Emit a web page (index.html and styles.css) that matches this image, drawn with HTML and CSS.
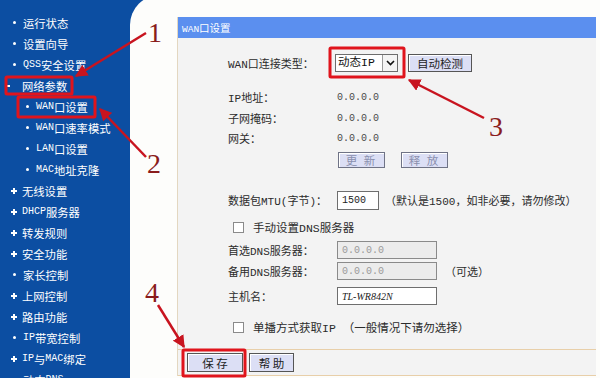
FILE: index.html
```html
<!DOCTYPE html>
<html lang="zh-CN">
<head>
<meta charset="utf-8">
<title>WAN口设置</title>
<link rel="stylesheet" href="styles.css">
</head>
<body>
<div class="page">
  <nav class="sidebar">
    <ul class="menu">
      <li class="dot">运行状态</li>
      <li class="dot">设置向导</li>
      <li class="dot"><span class="en">QSS</span>安全设置</li>
      <li class="minus">网络参数</li>
      <li class="sub"><span class="en">WAN</span>口设置</li>
      <li class="sub"><span class="en">WAN</span>口速率模式</li>
      <li class="sub"><span class="en">LAN</span>口设置</li>
      <li class="sub"><span class="en">MAC</span>地址克隆</li>
      <li class="star">无线设置</li>
      <li class="star"><span class="en">DHCP</span>服务器</li>
      <li class="star">转发规则</li>
      <li class="star">安全功能</li>
      <li class="dot">家长控制</li>
      <li class="star">上网控制</li>
      <li class="star">路由功能</li>
      <li class="dot"><span class="en">IP</span>带宽控制</li>
      <li class="star"><span class="en">IP</span>与<span class="en">MAC</span>绑定</li>
      <li class="dot">动态<span class="en">DNS</span></li>
    </ul>
  </nav>

  <main class="main">
    <section class="panel">
      <div class="panel-head"><span class="en">WAN</span>口设置</div>
      <div class="panel-body">
        <div class="row row-type">
          <span class="label">WAN口连接类型：</span>
          <span class="value">
            <span class="select"><span class="select-text">动态IP</span><span class="select-arrow"><svg width="9" height="6" viewBox="0 0 9 6"><polyline points="1,1 4.5,4.5 8,1" fill="none" stroke="#111" stroke-width="1.6"/></svg></span></span>
            <span class="btn btn-detect">自动检测</span>
          </span>
        </div>
        <div class="row row-ip">
          <span class="label">IP地址：</span>
          <span class="value num">0.0.0.0</span>
        </div>
        <div class="row row-tight">
          <span class="label">子网掩码：</span>
          <span class="value num">0.0.0.0</span>
        </div>
        <div class="row">
          <span class="label">网关：</span>
          <span class="value num">0.0.0.0</span>
        </div>
        <div class="row row-btns">
          <span class="label"></span>
          <span class="value">
            <span class="btn btn-off btn-renew">更 新</span>
            <span class="btn btn-off btn-release">释 放</span>
          </span>
        </div>
        <div class="row row-mtu">
          <span class="label">数据包MTU(字节)：</span>
          <span class="value">
            <span class="input input-mtu">1500</span>
            <span class="note">（默认是1500，如非必要，请勿修改）</span>
          </span>
        </div>
        <div class="row row-check1">
          <span class="check"><span class="box"></span>手动设置DNS服务器</span>
        </div>
        <div class="row row-dns1">
          <span class="label">首选DNS服务器：</span>
          <span class="value"><span class="input input-off">0.0.0.0</span></span>
        </div>
        <div class="row row-tight">
          <span class="label">备用DNS服务器：</span>
          <span class="value"><span class="input input-off">0.0.0.0</span><span class="note note-opt">（可选）</span></span>
        </div>
        <div class="row row-host">
          <span class="label">主机名：</span>
          <span class="value"><span class="input input-host">TL-WR842N</span></span>
        </div>
        <div class="row row-check2">
          <span class="check"><span class="box"></span>单播方式获取IP （一般情况下请勿选择）</span>
        </div>
      </div>
      <div class="panel-foot">
        <span class="btn btn-save">保 存</span>
        <span class="btn btn-help">帮 助</span>
      </div>
    </section>
  </main>

  <svg class="marks" width="600" height="378" viewBox="0 0 600 378">
    <defs>
      <marker id="ah" viewBox="0 0 10 10" refX="9" refY="5" markerWidth="5" markerHeight="5" orient="auto">
        <path d="M0,0 L10,5 L0,10 z" fill="#c8141f"/>
      </marker>
    </defs>
    <g fill="none" stroke="#e0141c" stroke-width="3">
      <rect x="6" y="77" width="66" height="17" rx="1"/>
      <rect x="18" y="97" width="77" height="20" rx="1"/>
      <rect x="330" y="48" width="74" height="29" rx="1"/>
      <rect x="183" y="350" width="62" height="26" rx="1"/>
    </g>
    <g stroke="#c8141f" stroke-width="2.5" marker-end="url(#ah)">
      <line x1="146" y1="33" x2="76" y2="76"/>
      <line x1="146" y1="157" x2="100" y2="109"/>
      <line x1="484" y1="118" x2="409" y2="80"/>
      <line x1="158" y1="305" x2="184" y2="347"/>
    </g>
    <g class="nums" fill="#8a1c1c">
      <text x="148" y="42">1</text>
      <text x="147" y="173">2</text>
      <text x="489" y="136">3</text>
      <text x="145" y="302">4</text>
    </g>
  </svg>
</div>
</body>
</html>
```

FILE: styles.css
```css
* {
  box-sizing: border-box;
  margin: 0;
  padding: 0;
}

html,
body {
  width: 600px;
  height: 378px;
  overflow: hidden;
}

body {
  background: #0c4ea2;
  font-family: "Liberation Mono", "Noto Sans CJK SC", monospace;
  color: #2b2b2b;
}

.page {
  position: relative;
  display: flex;
  width: 600px;
  height: 378px;
}

/* ---------- sidebar ---------- */
.sidebar {
  width: 130px;
  flex: none;
  background: #0c4ea2;
  color: #fff;
}

.menu {
  list-style: none;
  padding-top: 12px;
  font-family: "Noto Sans CJK SC", sans-serif;
  font-size: 11.3px;
}

.menu li {
  display: flex;
  align-items: center;
  height: 21px;
  white-space: nowrap;
}

.menu .en {
  font-family: "Liberation Mono", monospace;
  font-size: 10px;
}

.menu li::before {
  content: "";
  flex: none;
}

.dot::before {
  width: 3px;
  height: 3px;
  border-radius: 50%;
  background: #fff;
  margin: 0 7px 0 13px;
}

.sub::before {
  width: 3px;
  height: 3px;
  border-radius: 50%;
  background: #fff;
  margin: 0 7px 0 26px;
}

.star::before {
  width: 6px;
  height: 6px;
  margin: 0 5px 0 11px;
  background:
    linear-gradient(#fff, #fff) center / 6px 2px no-repeat,
    linear-gradient(#fff, #fff) center / 2px 6px no-repeat;
}

.minus::before {
  width: 5px;
  height: 2px;
  background: #fff;
  margin: 0 12px 0 5px;
}

/* ---------- main ---------- */
.main {
  flex: 1;
  background: #fdfdfb;
  margin-top: -5px;
  border-top-left-radius: 30px;
  padding: 22px 4px 0 47px;
}

.panel {
  background: #f3f3f3;
  border-left: 1px solid #e3d7c0;
}

.panel-head {
  height: 21px;
  background: #5b8fef;
  color: #fff;
  font-family: "Noto Sans CJK SC", sans-serif;
  font-size: 10.5px;
  line-height: 21px;
  padding-left: 4px;
}

.panel-head .en {
  font-family: "Liberation Mono", monospace;
  font-size: 9.5px;
}

.panel-body {
  height: 311px;
  padding: 14px 0 0 50px;
  font-size: 11px;
}

.row {
  display: grid;
  grid-template-columns: 109px auto;
  align-items: center;
  height: 20px;
}

.row-type { height: 22px; }
.row-ip { margin-top: 13px; }
.row-tight { margin-top: 1px; }
.row-btns { margin-top: 2px; }
.row-mtu { margin-top: 20px; }
.row-check1 { margin-top: 7px; }
.row-dns1 { margin-top: 3px; }
.row-host { margin-top: 5px; }
.row-check2 { margin-top: 11px; }

.label {
  white-space: nowrap;
  color: #2b2b2b;
}

.value {
  display: flex;
  align-items: center;
  white-space: nowrap;
}

.num {
  font-size: 10px;
  color: #4a4a4a;
}

.select {
  display: flex;
  align-items: stretch;
  height: 18px;
  width: 63px;
  margin-left: -2px;
  border: 1px solid #6d6d6d;
  background: #fff;
  font-size: 11.5px;
  color: #111;
}

.select-text {
  flex: 1;
  padding-left: 2px;
  line-height: 16px;
}

.select-arrow {
  width: 15px;
  display: flex;
  align-items: center;
  justify-content: center;
  border-left: 1px solid #9a9a9a;
  background: #f4f4f4;
}

.btn {
  display: inline-flex;
  align-items: center;
  justify-content: center;
  height: 18px;
  background: #dcdff5;
  border: 1px solid #555;
  box-shadow: inset 1px 1px 0 #fff;
  font-family: "Noto Sans CJK SC", sans-serif;
  font-size: 11.5px;
  color: #1e1e1e;
}

.btn-detect {
  width: 64px;
  margin-left: 10px;
}

.btn-off {
  height: 16px;
  color: #8a8fae;
  border-color: #6f7386;
  letter-spacing: 2px;
}

.btn-renew {
  width: 47px;
  margin-left: 1px;
}

.btn-release {
  width: 47px;
  margin-left: 16px;
}

.input {
  display: inline-flex;
  align-items: center;
  height: 18px;
  border: 1px solid #6e6e6e;
  background: #fff;
  padding-left: 4px;
  font-size: 10px;
  color: #222;
}

.input-mtu {
  width: 42px;
  height: 19px;
}

.input-off {
  width: 100px;
  background: #ececec;
  color: #9a9a9a;
  border-color: #8a8a8a;
}

.input-host {
  width: 100px;
  font-family: "Liberation Serif", serif;
  font-style: italic;
  font-size: 10px;
}

.note {
  margin-left: 6px;
  font-size: 11px;
  color: #2b2b2b;
}

.note-opt {
  margin-left: 8px;
}

.check {
  grid-column: 1 / -1;
  display: flex;
  align-items: center;
  font-size: 11.5px;
  white-space: nowrap;
}

.box {
  width: 11px;
  height: 11px;
  border: 1px solid #8a8a8a;
  background: #fff;
  margin: 0 9px 0 5px;
}

.panel-foot {
  display: flex;
  height: 27px;
  padding: 3px 0 0 9px;
  border-top: 1px solid #e8cfa9;
  border-bottom: 1px solid #e8cfa9;
}

.btn-save {
  width: 56px;
  height: 19px;
}

.btn-help {
  width: 45px;
  height: 19px;
  margin-left: 6px;
}

/* ---------- annotations ---------- */
.marks {
  position: absolute;
  left: 0;
  top: 0;
  pointer-events: none;
}

.nums {
  font-family: "Liberation Serif", serif;
  font-size: 28px;
}
```
